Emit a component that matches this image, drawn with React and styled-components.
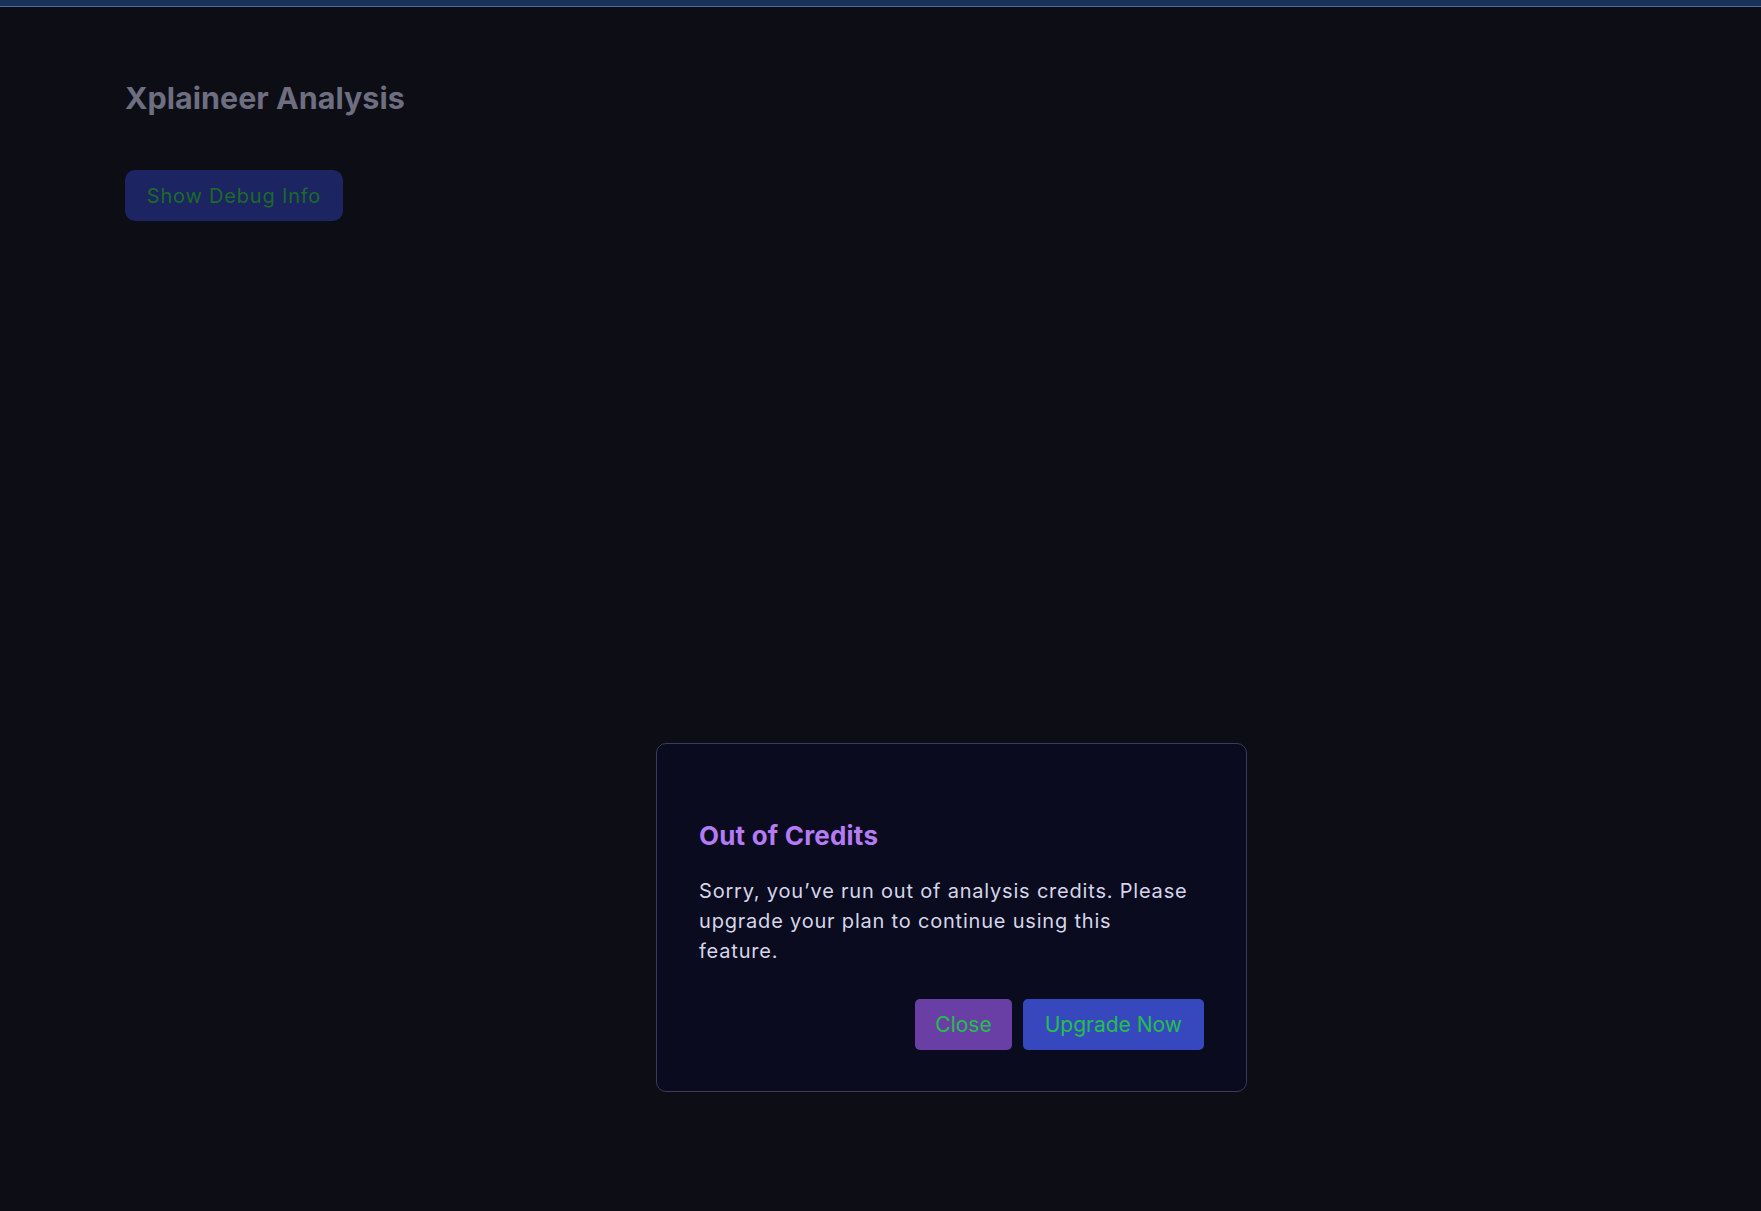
import React from 'react';
import styled, { createGlobalStyle } from 'styled-components';

const GlobalStyle = createGlobalStyle`
  html, body {
    margin: 0;
    padding: 0;
    background: #0c0d15;
    font-family: Inter, "Noto Sans", sans-serif;
    height: 100%;
  }
  #root {
    min-height: 100%;
  }
`;

const TopBar = styled.div`
  height: 6px;
  background: #17325a;
  border-bottom: 1px solid #4f6c98;
`;

const Page = styled.main`
  min-height: 1204px;
  padding: 73px 125px 0;
  box-sizing: border-box;
`;

const Heading = styled.h1`
  margin: 0;
  font-size: 30.5px;
  line-height: 36px;
  font-weight: 700;
  color: #6d6e80;
`;

const DebugButton = styled.button`
  margin-top: 54px;
  width: 218px;
  height: 51px;
  border: none;
  border-radius: 10px;
  background: #1c2461;
  color: #1b6b2a;
  font-family: inherit;
  font-size: 20px;
  letter-spacing: 0.8px;
  cursor: pointer;
`;

const Overlay = styled.div`
  position: fixed;
  inset: 0;
  display: flex;
  align-items: flex-start;
  padding: 743px 0 0 656px;
  box-sizing: border-box;
`;

const Dialog = styled.div`
  width: 591px;
  box-sizing: border-box;
  padding: 76px 42px 41px;
  background: #0a0b1f;
  border: 1px solid #3b3c58;
  border-radius: 10px;
`;

const DialogTitle = styled.h2`
  margin: 0;
  font-size: 26px;
  line-height: 32px;
  font-weight: 700;
  letter-spacing: 0.2px;
  color: #b57bf4;
`;

const DialogText = styled.p`
  margin: 24px 0 0;
  max-width: 494px;
  font-size: 20px;
  line-height: 30px;
  letter-spacing: 0.8px;
  color: #d6d6ea;
`;

const Actions = styled.div`
  display: flex;
  justify-content: flex-end;
  gap: 11px;
  margin-top: 33px;
`;

const ActionButton = styled.button`
  height: 51px;
  padding: 0 ${p => (p.$primary ? 22 : 20)}px;
  border: none;
  border-radius: 5px;
  background: ${p => (p.$primary ? '#3748bf' : '#6a3fa5')};
  color: #22c04b;
  font-family: inherit;
  font-size: 21px;
  cursor: pointer;
`;

const App = () => (
  <>
    <GlobalStyle />
    <TopBar />
    <Page>
      <Heading>Xplaineer Analysis</Heading>
      <DebugButton>Show Debug Info</DebugButton>
    </Page>
    <Overlay>
      <Dialog>
        <DialogTitle>Out of Credits</DialogTitle>
        <DialogText>
          Sorry, you’ve run out of analysis credits. Please upgrade your plan to continue using this feature.
        </DialogText>
        <Actions>
          <ActionButton>Close</ActionButton>
          <ActionButton $primary>Upgrade Now</ActionButton>
        </Actions>
      </Dialog>
    </Overlay>
  </>
);

export default App;
